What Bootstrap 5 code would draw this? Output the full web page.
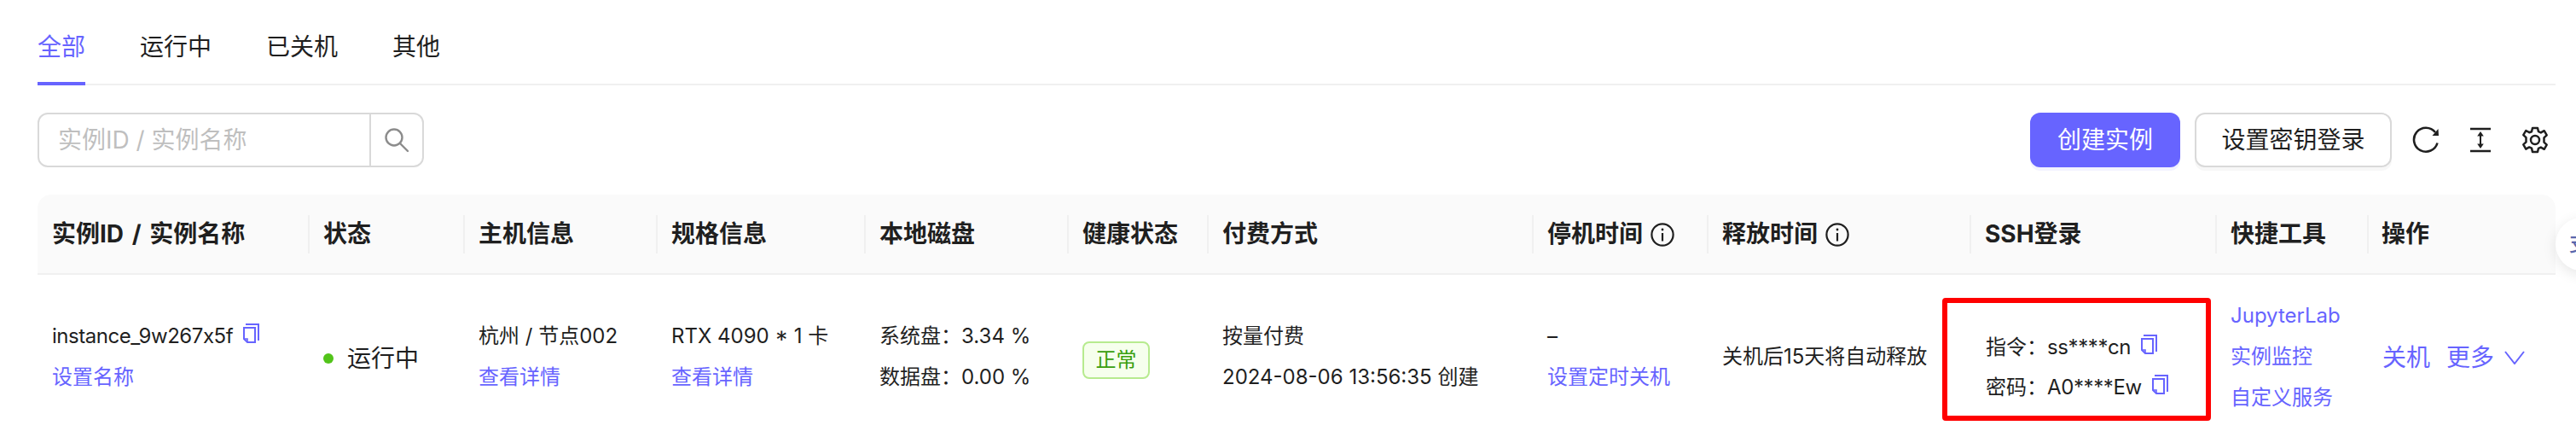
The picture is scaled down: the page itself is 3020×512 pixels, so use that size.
<!DOCTYPE html>
<html lang="zh-CN">
<head>
<meta charset="utf-8">
<title>实例列表</title>
<link href="https://cdn.jsdelivr.net/npm/bootstrap@5.3.0/dist/css/bootstrap.min.css" rel="stylesheet">
<style>
:root { --brand: #6764ff; --ink: #1f1f1f; --line: #f0f0f0; }
html, body { height: 512px; overflow: hidden; }
body { background: #fff; color: var(--ink); font-family: Inter, "Noto Sans CJK SC", sans-serif; font-size: 24px; }
.page-wrap { padding: 0 24px 0 44px; position: relative; height: 512px; }
.tab-bar { height: 100px; border-bottom: 2px solid var(--line); gap: 64px; }
.tab-item { font-size: 28px; line-height: 40px; padding: 35px 0 23px; height: 100px; color: var(--ink); }
.tab-item.is-on { color: var(--brand); border-bottom: 4px solid var(--brand); width: 56px; }
.tool-row { height: 128px; padding-top: 32px; }
.search-box { width: 453px; height: 64px; border: 2px solid #d9d9d9; border-radius: 12px; }
.search-field { flex: 1; padding: 0 22px; font-size: 28px; color: #bfbfbf; line-height: 60px; border-right: 2px solid #d9d9d9; }
.search-btn { width: 60px; }
.act-btn { height: 64px; border-radius: 12px; font-size: 28px; padding: 0; box-shadow: 0 4px 0 #f3f3ff; line-height: 1; }
.act-primary { width: 176px; background: var(--brand); border: 0; color: #fff; }
.act-plain { width: 231px; background: #fff; border: 2px solid #d9d9d9; color: var(--ink); margin-left: 17px; box-shadow: 0 4px 0 #f7f7f7; }
.tool-icons { margin-left: 24px; gap: 36px; padding-right: 8px; }
.inst-table { table-layout: fixed; width: 2952px; border-collapse: separate; border-spacing: 0; font-size: 24px; }
.inst-table th { background: #fafafa; height: 94px; border-bottom: 2px solid var(--line); font-size: 28px; font-weight: 700; padding: 0 0 0 18px; position: relative; vertical-align: middle; white-space: nowrap; line-height: 40px; }
.inst-table th + th::before { content: ""; position: absolute; left: 0; top: 24px; height: 45px; width: 2px; background: #f0f0f0; }
.inst-table th:first-child { border-top-left-radius: 16px; padding-left: 17px; word-spacing: 3px; }
.inst-table th:last-child { border-top-right-radius: 16px; padding-left: 17px; }
.inst-table td { padding: 0 0 0 18px; height: 190px; vertical-align: top; white-space: nowrap; border: 0; color: var(--ink); }
.inst-table td:first-child { padding-left: 17px; }
.cell-two { padding-top: 48px; line-height: 48px; }
.cell-mid { padding-top: 78px; line-height: 36px; }
.name-text { letter-spacing: -.47px; }
.mask-text { letter-spacing: -.4px; }
.brand-link { color: var(--brand); text-decoration: none; }
.run-dot { width: 12px; height: 12px; border-radius: 50%; background: #52c41a; margin-right: 16px; }
.run-text { font-size: 28px; line-height: 40px; }
.ok-tag { width: 79px; height: 44px; line-height: 40px; border: 2px solid #b7eb8f; background: #f6ffed; color: #389e0d; border-radius: 8px; text-align: center; }
.info-ico { width: 28px; height: 28px; margin-left: 9px; vertical-align: -5px; }
.copy-ico { width: 19px; height: 23px; margin-left: 12px; vertical-align: 0; }
.red-mark { position: absolute; left: -32px; top: 27px; width: 315px; height: 144px; border: 6px solid #f00; border-radius: 4px; pointer-events: none; }
.ssh-cell { position: relative; }
.ssh-lines { padding: 61px 0 0 1px; line-height: 47px; }
.tool-links { padding-top: 24px; line-height: 48px; font-size: 24px; }
.op-links { padding-top: 77px; font-size: 28px; line-height: 40px; gap: 19px; }
.more-chev { margin-left: 12px; }
.help-float { position: absolute; left: 2996px; top: 255px; width: 62px; height: 62px; border-radius: 50%; background: #fff; box-shadow: 0 4px 16px rgba(0,0,0,.1); color: #5a68ad; font-size: 24px; font-weight: 500; line-height: 62px; text-align: left; padding-left: 16px; }
</style>
</head>
<body>
<svg width="0" height="0" class="position-absolute"><defs>
  <symbol id="copy-sym" viewBox="0 0 19 23"><g fill="none" stroke="#6764ff" stroke-width="2"><path d="M3 1h15v19"/><path d="M1 5h13v17H5l-4-4z"/><path d="M1 18h4v4" stroke-width="1.600"/></g></symbol>
  <symbol id="info-sym" viewBox="0 0 28 28"><g fill="none" stroke="#1f1f1f" stroke-width="2.200"><circle cx="14" cy="14" r="12.600"/><path d="M14 12v9.500"/><circle cx="14" cy="8" r="1.400" fill="#1f1f1f" stroke="none"/></g></symbol>
</defs></svg>
<div class="page-wrap">
  <div class="d-flex tab-bar">
    <div class="tab-item is-on">全部</div>
    <div class="tab-item">运行中</div>
    <div class="tab-item">已关机</div>
    <div class="tab-item">其他</div>
  </div>

  <div class="d-flex justify-content-between align-items-start tool-row">
    <div class="d-flex search-box">
      <div class="search-field">实例ID / 实例名称</div>
      <div class="search-btn d-flex align-items-center justify-content-center">
        <svg width="32" height="32" viewBox="0 0 32 32" fill="none" stroke="#8c8c8c" stroke-width="2.400"><circle cx="13" cy="13" r="9.500"/><path d="M20 20l9 9" stroke-linecap="round"/></svg>
      </div>
    </div>
    <div class="d-flex align-items-center">
      <button type="button" class="btn act-btn act-primary">创建实例</button>
      <button type="button" class="btn act-btn act-plain">设置密钥登录</button>
      <div class="d-flex align-items-center tool-icons">
        <svg width="32" height="32" viewBox="0 0 32 32" fill="none" stroke="#1f1f1f" stroke-width="2.600"><path d="M27 7A14 14 0 1 0 29.500 19.500"/><path d="M23.500 11h7.500l-.5-8z" fill="#1f1f1f" stroke="none"/></svg>
        <svg width="24" height="30" viewBox="0 0 24 30" fill="none" stroke="#1f1f1f"><path d="M0 2h24M0 28h24" stroke-width="2.700"/><path d="M12 7v16" stroke-width="2"/><path d="M12 5l-3.800 5.500h7.600zM12 25l-3.800-5.500h7.600z" fill="#1f1f1f" stroke="none"/></svg>
        <svg width="32" height="32" viewBox="0 0 32 32" fill="none" stroke="#1f1f1f" stroke-width="2.500" stroke-linejoin="round"><path d="M13 2h6l1 4.200 2.800 1.200 3.900-2.200 3 5.200-3.200 3v5.200l3.200 3-3 5.200-3.900-2.200-2.800 1.200L19 30h-6l-1-4.400-2.800-1.200-3.900 2.200-3-5.200 3.200-3v-5.200l-3.200-3 3-5.200 3.900 2.200L12 6.200z"/><circle cx="16" cy="16" r="5"/></svg>
      </div>
    </div>
  </div>

  <table class="inst-table">
    <colgroup>
      <col style="width:317px"><col style="width:182px"><col style="width:226px"><col style="width:244px">
      <col style="width:238px"><col style="width:164px"><col style="width:381px"><col style="width:205px">
      <col style="width:308px"><col style="width:288px"><col style="width:178px"><col style="width:221px">
    </colgroup>
    <thead>
      <tr>
        <th>实例ID / 实例名称</th>
        <th>状态</th>
        <th>主机信息</th>
        <th>规格信息</th>
        <th>本地磁盘</th>
        <th>健康状态</th>
        <th>付费方式</th>
        <th>停机时间<svg class="info-ico"><use href="#info-sym"/></svg></th>
        <th>释放时间<svg class="info-ico"><use href="#info-sym"/></svg></th>
        <th>SSH登录</th>
        <th>快捷工具</th>
        <th>操作</th>
      </tr>
    </thead>
    <tbody>
      <tr>
        <td><div class="cell-two"><span class="name-text">instance_9w267x5f</span><svg class="copy-ico"><use href="#copy-sym"/></svg><br><a class="brand-link" href="#">设置名称</a></div></td>
        <td><div class="d-flex align-items-center cell-mid"><span class="run-dot"></span><span class="run-text">运行中</span></div></td>
        <td><div class="cell-two">杭州 / 节点002<br><a class="brand-link" href="#">查看详情</a></div></td>
        <td><div class="cell-two">RTX 4090 * 1 卡<br><a class="brand-link" href="#">查看详情</a></div></td>
        <td><div class="cell-two">系统盘：3.34 %<br>数据盘：0.00 %</div></td>
        <td><div class="cell-mid"><div class="ok-tag">正常</div></div></td>
        <td><div class="cell-two">按量付费<br>2024-08-06 13:56:35 创建</div></td>
        <td><div class="cell-two">–<br><a class="brand-link" href="#">设置定时关机</a></div></td>
        <td><div class="cell-mid">关机后15天将自动释放</div></td>
        <td class="ssh-cell"><div class="ssh-lines">指令：<span class="mask-text">ss****cn</span><svg class="copy-ico"><use href="#copy-sym"/></svg><br>密码：<span class="mask-text">A0****Ew</span><svg class="copy-ico"><use href="#copy-sym"/></svg></div><div class="red-mark"></div></td>
        <td><div class="tool-links"><a class="brand-link" href="#">JupyterLab</a><br><a class="brand-link" href="#">实例监控</a><br><a class="brand-link" href="#">自定义服务</a></div></td>
        <td><div class="d-flex align-items-center op-links"><a class="brand-link" href="#">关机</a><a class="brand-link d-flex align-items-center" href="#">更多<svg class="more-chev" width="24" height="16" viewBox="0 0 24 16" fill="none" stroke="#6764ff" stroke-width="2"><path d="M1 1l11 14L23 1"/></svg></a></div></td>
      </tr>
    </tbody>
  </table>
  <div class="help-float">支</div>
</div>
<script src="https://cdn.jsdelivr.net/npm/bootstrap@5.3.0/dist/js/bootstrap.bundle.min.js"></script>
</body>
</html>
